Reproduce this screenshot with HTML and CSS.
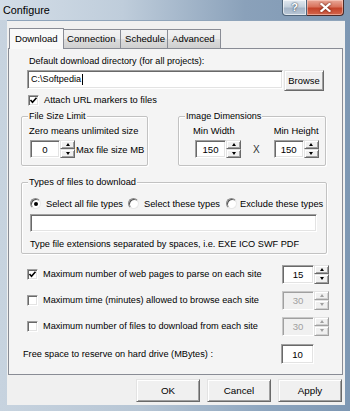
FILE: index.html
```html
<!DOCTYPE html>
<html>
<head>
<meta charset="utf-8">
<link rel="stylesheet" href="styles.css">
</head>
<body>
<div class="window">
  <div class="titlebar">
    <span class="title">Configure</span>
    <div class="caption">
      <div class="cap-help">?</div>
      <div class="cap-close">
        <svg width="11" height="9" viewBox="0 0 11 9"><path d="M1.5 1 L9.5 8 M9.5 1 L1.5 8" stroke="#fff" stroke-width="2.2" stroke-linecap="square"/></svg>
      </div>
    </div>
  </div>
  <div class="client">
    <div class="tabs">
      <div class="tab active">Download</div>
      <div class="tab t-conn">Connection</div>
      <div class="tab t-sched">Schedule</div>
      <div class="tab t-adv">Advanced</div>
    </div>
    <div class="panel">
      <div class="lbl-dir">Default download directory (for all projects):</div>
      <div class="dir-row">
        <div class="field dir-input">C:\Softpedia<span class="caret"></span></div>
        <div class="btn browse">Browse</div>
      </div>
      <div class="chk-row attach">
        <span class="chk"><svg width="9" height="9" viewBox="0 0 9 9"><path d="M1.5 4 L3.5 6.2 L7.5 1.8" fill="none" stroke="#000" stroke-width="1.6"/></svg></span>
        <span class="chk-label">Attach URL markers to files</span>
      </div>
      <div class="group-row">
        <div class="group g-size">
          <span class="legend">File Size Limit</span>
          <div class="g-line zero">Zero means unlimited size</div>
          <div class="spin-row sr-size">
            <div class="field num w30">0</div>
            <div class="spin"><span class="sb"><i class="up"></i></span><span class="sb"><i class="dn"></i></span></div>
            <span class="after">Max file size MB</span>
          </div>
        </div>
        <div class="group g-img">
          <span class="legend">Image Dimensions</span>
          <div class="img-cols">
            <div class="img-col c1">
              <div class="g-line">Min Width</div>
              <div class="spin-row sr-img1">
                <div class="field num w31">150</div>
                <div class="spin"><span class="sb"><i class="up"></i></span><span class="sb"><i class="dn"></i></span></div>
              </div>
            </div>
            <div class="times">X</div>
            <div class="img-col c2">
              <div class="g-line">Min Height</div>
              <div class="spin-row">
                <div class="field num w30">150</div>
                <div class="spin"><span class="sb"><i class="up"></i></span><span class="sb"><i class="dn"></i></span></div>
              </div>
            </div>
          </div>
        </div>
      </div>
      <div class="group g-types">
        <span class="legend">Types of files to download</span>
        <div class="radio-row">
          <div class="radio-item ri1"><span class="radio on"><span class="dot"></span></span><span class="rlabel">Select all file types</span></div>
          <div class="radio-item ri2"><span class="radio"></span><span class="rlabel">Select these types</span></div>
          <div class="radio-item ri3"><span class="radio"></span><span class="rlabel">Exclude these types</span></div>
        </div>
        <div class="field types-input"></div>
        <div class="hint">Type file extensions separated by spaces, i.e. EXE ICO SWF PDF</div>
      </div>
      <div class="opt-rows">
        <div class="opt-row">
          <span class="chk"><svg width="9" height="9" viewBox="0 0 9 9"><path d="M1.5 4 L3.5 6.2 L7.5 1.8" fill="none" stroke="#000" stroke-width="1.6"/></svg></span>
          <span class="chk-label">Maximum number of web pages to parse on each site</span>
          <div class="opt-spin">
            <div class="field num w32">15</div>
            <div class="spin tall"><span class="sb"><i class="up"></i></span><span class="sb"><i class="dn"></i></span></div>
          </div>
        </div>
        <div class="opt-row">
          <span class="chk"></span>
          <span class="chk-label">Maximum time (minutes) allowed to browse each site</span>
          <div class="opt-spin disabled">
            <div class="field num w32">30</div>
            <div class="spin tall"><span class="sb"><i class="up"></i></span><span class="sb"><i class="dn"></i></span></div>
          </div>
        </div>
        <div class="opt-row">
          <span class="chk"></span>
          <span class="chk-label">Maximum number of files to download from each site</span>
          <div class="opt-spin disabled">
            <div class="field num w32">30</div>
            <div class="spin tall"><span class="sb"><i class="up"></i></span><span class="sb"><i class="dn"></i></span></div>
          </div>
        </div>
      </div>
      <div class="free-row">
        <span class="free-label">Free space to reserve on hard drive (MBytes) :</span>
        <div class="field num free-input">10</div>
      </div>
    </div>
    <div class="buttons">
      <div class="btn dlg">OK</div>
      <div class="btn dlg">Cancel</div>
      <div class="btn dlg">Apply</div>
    </div>
  </div>
</div>
</body>
</html>
```
FILE: styles.css
```css
* { box-sizing: border-box; }
html, body { margin: 0; padding: 0; }
body {
  width: 350px;
  height: 411px;
  overflow: hidden;
  font-family: "Liberation Sans", Arial, sans-serif;
  font-size: 9.1px;
  color: #000;
}
.window {
  width: 350px;
  height: 411px;
  background: linear-gradient(90deg, #c7d3df 0%, #b7c6d5 40%, #8ea6bf 75%, #7d97b3 100%);
  display: flex;
  flex-direction: column;
}
.titlebar {
  height: 20px;
  display: flex;
  align-items: flex-start;
  background: linear-gradient(90deg, #d3dde7 0%, #bfcddb 35%, #8aa1ba 70%, #7e98b4 100%);
}
.title {
  font-size: 10.8px;
  margin: 4px 0 0 3px;
  line-height: 12px;
  color: #000;
}
.caption {
  margin-left: auto;
  margin-right: 6px;
  display: flex;
}
.cap-help {
  width: 25px;
  height: 16px;
  border: 1px solid #4f6479;
  border-top: none;
  border-radius: 0 0 0 4px;
  background: linear-gradient(180deg, #e2e9f0 0%, #c5d1dd 45%, #a6b6c8 55%, #b9c7d6 100%);
  color: #fff;
  font-weight: bold;
  font-size: 11px;
  line-height: 15px;
  text-align: center;
  text-shadow: 0 0 2px #394b5e, 0 0 1px #394b5e;
  box-shadow: inset 0 0 0 1px rgba(255,255,255,0.6);
}
.cap-close {
  width: 37px;
  height: 16px;
  border: 1px solid #4a2a28;
  border-left: none;
  border-top: none;
  border-radius: 0 0 4px 0;
  background: linear-gradient(180deg, #e9a99a 0%, #d9735d 45%, #c4432a 55%, #d2664d 100%);
  display: flex;
  align-items: center;
  justify-content: center;
  box-shadow: inset 0 0 0 1px rgba(255,220,210,0.5);
}
.cap-close svg { filter: drop-shadow(0 0 1px #5a1c10); }

.client {
  margin: 0 5px 0 7px;
  width: 338px;
  height: 385px;
  background: #f0f0f0;
  padding: 7px 2px 0 1px;
  border-top: 1px solid #8fa4ba;
}
.tabs {
  display: flex;
  align-items: flex-end;
  height: 20px;
  padding-left: 1px;
}
.tab {
  height: 19px;
  line-height: 17px;
  padding: 0 0 0 5px;
  border: 1px solid #898c95;
  border-bottom: none;
  margin-left: -1px;
  background: linear-gradient(180deg, #f2f2f2 0%, #ebebeb 50%, #dddddd 51%, #cfcfcf 100%);
  font-size: 9.6px;
}
.tab.active {
  height: 21px;
  margin-bottom: -1px;
  position: relative;
  z-index: 1;
  background: #f9f9f9;
  width: 55px;
  padding-left: 5px;
  line-height: 19px;
  margin-left: 0;
}
.t-conn { width: 58px; padding-left: 3px; }
.t-sched { width: 48px; padding-left: 4px; }
.t-adv { width: 54px; padding-left: 4px; }

.panel {
  width: 335px;
  height: 327px;
  border: 1px solid #898c95;
  background: #f4f4f4;
  display: flex;
  flex-direction: column;
  align-items: flex-start;
}
.lbl-dir {
  margin: 7px 0 0 20px;
  line-height: 11px;
}
.dir-row {
  display: flex;
  margin: 3px 0 0 18px;
  height: 20px;
}
.field {
  background: #fff;
  border: 1px solid;
  border-color: #a0a0a0 #fff #fff #a0a0a0;
  box-shadow: inset 1px 1px 0 #696969, inset -1px -1px 0 #e3e3e3;
}
.dir-input {
  width: 256px;
  height: 19px;
  padding: 0 0 0 3px;
  line-height: 17px;
  display: flex;
  align-items: center;
}
.caret {
  display: inline-block;
  width: 1px;
  height: 11px;
  background: #000;
  margin-left: 1px;
}
.btn {
  background: #f0f0f0;
  border: 1px solid;
  border-color: #e3e3e3 #696969 #696969 #e3e3e3;
  box-shadow: inset 1px 1px 0 #fff, inset -1px -1px 0 #a0a0a0;
  display: flex;
  align-items: center;
  justify-content: center;
}
.browse {
  width: 40px;
  height: 21px;
  margin-left: 1px;
  font-size: 9.4px;
}
.chk-row {
  display: flex;
  align-items: center;
  height: 13px;
}
.attach { margin: 4px 0 0 19px; }
.chk {
  width: 11px;
  height: 11px;
  flex: none;
  background: #fff;
  border: 1px solid;
  border-color: #a0a0a0 #fff #fff #a0a0a0;
  box-shadow: inset 1px 1px 0 #696969, inset -1px -1px 0 #e3e3e3;
  display: flex;
  align-items: center;
  justify-content: center;
}
.chk svg { display: block; }
.chk-label {
  margin-left: 6px;
  line-height: 11px;
}
.attach .chk-label { font-size: 9.3px; margin-left: 5px; }

.group-row {
  display: flex;
  margin-top: 9px;
}
.group {
  border: 1px solid #c2c2c2;
  box-shadow: inset 1px 1px 0 #fff, 1px 1px 0 #fff;
  border-radius: 2px;
  display: flex;
  flex-direction: column;
  align-items: flex-start;
}
.legend {
  display: block;
  margin: -6px 0 0 6px;
  padding: 0 1px;
  background: #f4f4f4;
  line-height: 11px;
}
.g-size {
  margin-left: 12px;
  width: 127px;
  height: 50px;
}
.g-line {
  line-height: 11px;
}
.zero {
  margin: 3px 0 0 7px;
  font-size: 9.4px;
}
.spin-row {
  display: flex;
  align-items: center;
}
.sr-size { margin: 4px 0 0 8px; }
.num {
  height: 18px;
  display: flex;
  align-items: center;
  justify-content: center;
  font-size: 9.6px;
}
.w30 { width: 30px; }
.w31 { width: 31px; }
.w32 { width: 32px; }
.spin {
  display: flex;
  flex-direction: column;
  width: 15px;
  height: 18px;
}
.spin.tall { height: 19px; }
.sb {
  flex: 1;
  background: #f0f0f0;
  border: 1px solid;
  border-color: #e3e3e3 #696969 #696969 #e3e3e3;
  box-shadow: inset 1px 1px 0 #fff, inset -1px -1px 0 #a0a0a0;
  display: flex;
  align-items: center;
  justify-content: center;
}
.sb i {
  display: block;
  width: 0;
  height: 0;
  border-left: 2.5px solid transparent;
  border-right: 2.5px solid transparent;
}
.sb i.up { border-bottom: 3px solid #000; }
.sb i.dn { border-top: 3px solid #000; }
.after {
  margin-left: 1px;
  font-size: 9.4px;
}
.g-img {
  margin-left: 30px;
  width: 148px;
  height: 50px;
}
.img-cols {
  display: flex;
  align-items: flex-end;
  margin-top: 3px;
}
.img-col {
  display: flex;
  flex-direction: column;
  align-items: flex-start;
}
.img-col .g-line { font-size: 9.4px; }
.img-col .spin-row { margin-top: 4px; }
.c1 { margin-left: 14px; }
.sr-img1 { margin-left: 2px; }
.times {
  margin: 0 0 3px 12px;
  font-size: 10px;
  color: #333;
  line-height: 11px;
}
.c2 { margin-left: 14px; }

.g-types {
  margin: 16px 0 0 12px;
  width: 306px;
  height: 72px;
}
.g-types .legend { font-size: 9.3px; }
.radio-row {
  display: flex;
  margin: 9px 0 0 8px;
  height: 13px;
  align-items: center;
}
.radio-item {
  display: flex;
  align-items: center;
  white-space: nowrap;
}
.ri1 { width: 98px; overflow: hidden; }
.ri2 { width: 98px; }
.ri3 { flex: none; }
.radio {
  width: 11px;
  height: 11px;
  flex: none;
  border-radius: 50%;
  background: #fff;
  border: 1px solid #8a8a8a;
  border-right-color: #e8e8e8;
  border-bottom-color: #e8e8e8;
  box-shadow: inset 1px 1px 0 #555;
  display: flex;
  align-items: center;
  justify-content: center;
}
.radio .dot {
  width: 4px;
  height: 4px;
  border-radius: 50%;
  background: #000;
}
.rlabel {
  margin-left: 5px;
  font-size: 9.3px;
}
.ri3 .rlabel { margin-left: 3px; }
.types-input {
  width: 287px;
  height: 18px;
  margin: 4px 0 0 8px;
}
.hint {
  margin: 7px 0 0 8px;
  line-height: 11px;
  font-size: 9.2px;
}

.opt-rows {
  display: flex;
  flex-direction: column;
  gap: 6px;
  margin-top: 10px;
  width: 100%;
}
.opt-row {
  display: flex;
  align-items: center;
  height: 20px;
  padding: 0 13px 0 18px;
}
.opt-row .chk-label { font-size: 9.2px; margin-left: 5px; }
.opt-spin {
  margin-left: auto;
  display: flex;
}
.opt-spin .num { height: 19px; }
.opt-spin.disabled .num {
  background: #f0f0f0;
  color: #a0a0a0;
  box-shadow: inset 1px 1px 0 #a0a0a0, inset -1px -1px 0 #f0f0f0;
  border-color: #c8c8c8 #fff #fff #c8c8c8;
}
.opt-spin.disabled .sb i.up { border-bottom-color: #a0a0a0; }
.opt-spin.disabled .sb i.dn { border-top-color: #a0a0a0; }
.opt-spin.disabled .sb {
  border-color: #e3e3e3 #a0a0a0 #a0a0a0 #e3e3e3;
  box-shadow: inset 1px 1px 0 #fff, inset -1px -1px 0 #d0d0d0;
}

.free-row {
  display: flex;
  align-items: center;
  width: 100%;
  height: 20px;
  margin-top: 8px;
  padding: 0 28px 0 14px;
}
.free-label { font-size: 9.2px; }
.free-input {
  margin-left: auto;
  width: 33px;
  height: 20px;
}

.buttons {
  display: flex;
  justify-content: flex-end;
  gap: 7px;
  margin-top: 4px;
  padding-right: 1px;
}
.dlg {
  width: 64px;
  height: 23px;
  font-size: 9.8px;
}
```
